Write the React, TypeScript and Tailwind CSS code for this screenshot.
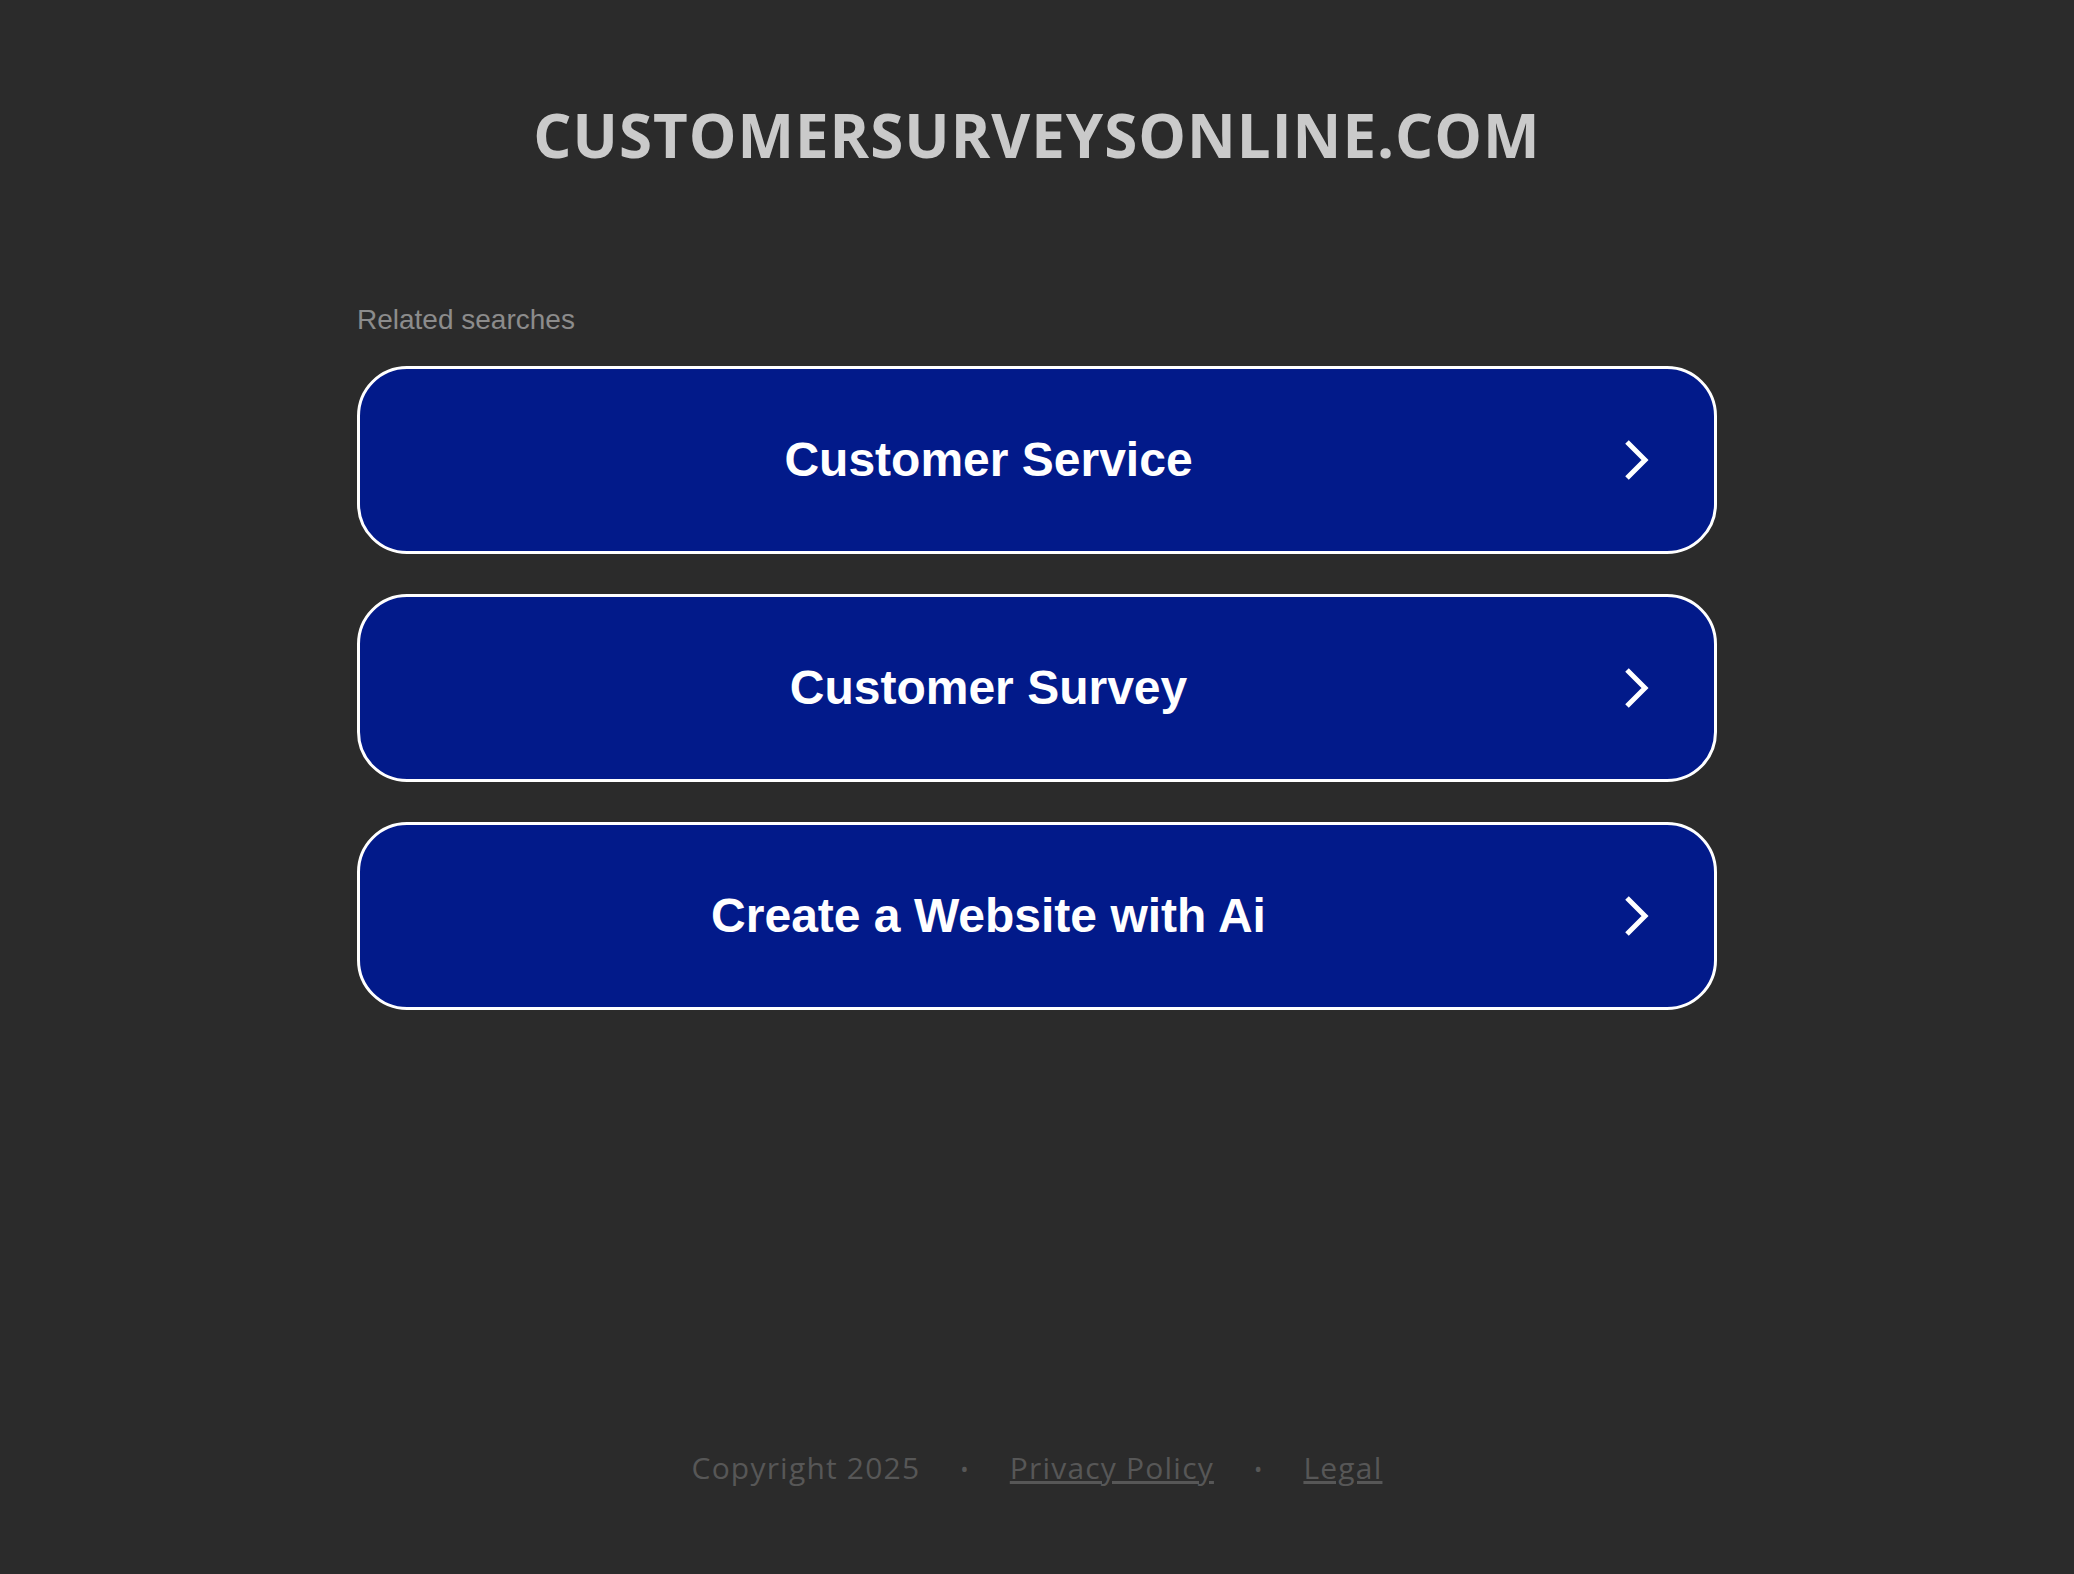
const searches = ["Customer Service", "Customer Survey", "Create a Website with Ai"]

function Chevron() {
  return (
    <svg viewBox="0 0 40 48" className="mr-[57px] h-[48px] w-[40px] shrink-0" fill="none">
      <path d="M10 6 L28 24 L10 42" stroke="#ffffff" strokeWidth="5" strokeLinejoin="miter" />
    </svg>
  )
}

function SearchButton({ label }: { label: string }) {
  return (
    <a
      href="#"
      className="flex h-[188px] w-full items-center rounded-[50px] border-[3px] border-white bg-[#021a8a] no-underline"
    >
      <span className="flex-1 text-center font-['Liberation_Sans',Arial,sans-serif] text-[48px] font-bold text-white">
        {label}
      </span>
      <Chevron />
    </a>
  )
}

export default function App() {
  return (
    <div className="flex min-h-screen flex-col bg-[#2b2b2b]">
      <header className="pt-[99px] text-center">
        <h1 className="font-['Open_Sans',sans-serif] text-[60px] leading-[72px] font-bold tracking-[1px] text-[#cacaca]">
          CUSTOMERSURVEYSONLINE.COM
        </h1>
      </header>

      <main className="mx-auto mt-[133px] w-[1360px]">
        <p className="font-['Liberation_Sans',Arial,sans-serif] text-[28px] leading-[32px] text-[#8c8c8c]">
          Related searches
        </p>
        <div className="mt-[30px] flex flex-col gap-[40px]">
          {searches.map((s) => (
            <SearchButton key={s} label={s} />
          ))}
        </div>
      </main>

      <footer className="mt-auto flex items-center justify-center gap-[40px] pb-[86px] font-['Open_Sans',sans-serif] text-[30px] leading-[40px] tracking-[1.2px] text-[#575757]">
        <span>Copyright 2025</span>
        <span className="text-[22px]">•</span>
        <a href="#" className="underline">Privacy Policy</a>
        <span className="text-[22px]">•</span>
        <a href="#" className="underline">Legal</a>
      </footer>
    </div>
  )
}
